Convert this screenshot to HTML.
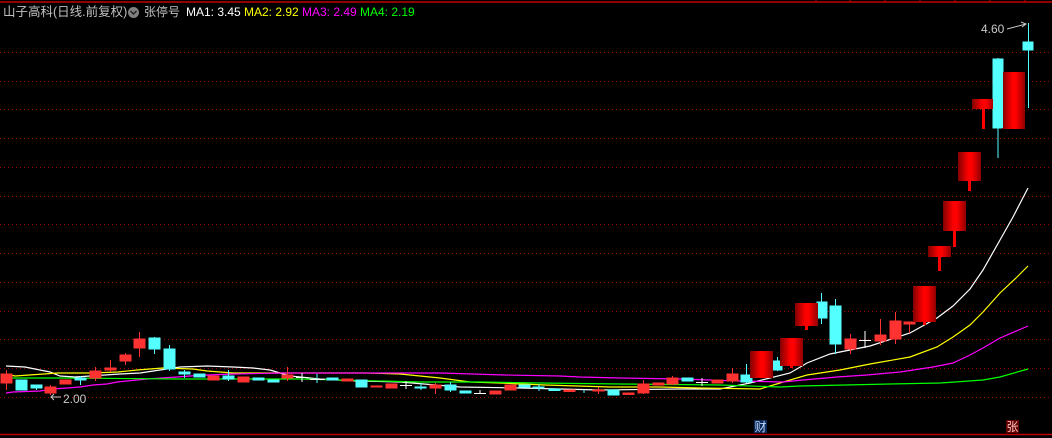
<!DOCTYPE html>
<html><head><meta charset="utf-8"><style>
body{margin:0;background:#000;width:1052px;height:438px;overflow:hidden;position:relative;font-family:"Liberation Sans","Noto Sans CJK SC",sans-serif}
.h{position:absolute;top:5px;font-size:12px;white-space:nowrap;color:#c0c0c0;line-height:14px}
</style></head><body>
<svg width="1052" height="438" style="position:absolute;left:0;top:0">
<defs>
<linearGradient id="rg" x1="0" x2="1" y1="0" y2="0">
<stop offset="0" stop-color="#800000"/><stop offset="0.45" stop-color="#ff0000"/><stop offset="0.6" stop-color="#ff0000"/><stop offset="1" stop-color="#900000"/>
</linearGradient>
</defs>
<line x1="0" y1="2" x2="1052" y2="2" stroke="#c00000" stroke-width="1.5"/>
<g stroke="#c00000" stroke-width="1">
<line x1="816" y1="0" x2="816" y2="2"/><line x1="850" y1="0" x2="850" y2="2"/><line x1="885" y1="0" x2="885" y2="2"/><line x1="920" y1="0" x2="920" y2="2"/><line x1="955" y1="0" x2="955" y2="2"/><line x1="990" y1="0" x2="990" y2="2"/><line x1="1025" y1="0" x2="1025" y2="2"/>
</g>
<line x1="0" y1="434.5" x2="1052" y2="434.5" stroke="#c00000" stroke-width="1.5"/>
<g stroke="#a00000" stroke-width="1" stroke-dasharray="1,3">
<line x1="0" y1="52.5" x2="1052" y2="52.5"/><line x1="0" y1="81.5" x2="1052" y2="81.5"/><line x1="0" y1="109.5" x2="1052" y2="109.5"/><line x1="0" y1="138.5" x2="1052" y2="138.5"/><line x1="0" y1="167.5" x2="1052" y2="167.5"/><line x1="0" y1="196.5" x2="1052" y2="196.5"/><line x1="0" y1="224.5" x2="1052" y2="224.5"/><line x1="0" y1="253.5" x2="1052" y2="253.5"/><line x1="0" y1="282.5" x2="1052" y2="282.5"/><line x1="0" y1="311.5" x2="1052" y2="311.5"/><line x1="0" y1="339.5" x2="1052" y2="339.5"/><line x1="0" y1="368.5" x2="1052" y2="368.5"/><line x1="0" y1="397.5" x2="1052" y2="397.5"/>
</g>
<g fill="none" stroke-width="1.2">
<polyline stroke="#ffffff" points="6,366 25,367 50,372 60,376 75,377 120,374 140,373 160,370 180,367 207,366 233,367 253,368 270,370 280,373 290,376 300,377 320,379 357,381 400,382 460,387 520,388 600,390 680,389 720,389 750,383 790,373 807,363 830,354 870,346 910,333 937,318 953,306 970,289 983,270 1000,240 1013,217 1028,188"/>
<polyline stroke="#ffff00" points="6,374 15,376 58,373 90,373 118,372 137,370 163,368 193,369 207,371 233,373 367,373 400,374 420,376 440,378 455,380 470,382 500,383 545,385 610,387 660,387 700,388 760,389 780,383 807,375 840,370 870,364 910,357 937,347 953,337 970,325 983,312 1000,293 1017,277 1028,266"/>
<polyline stroke="#ff00ff" points="6,393 13,392 40,391 53,389 67,388 80,387 93,385 107,384 117,382 127,381 147,379 177,377 190,376 207,375 233,374 283,373 440,373 505,375 560,376 580,377 620,378 680,379 740,381 783,382 803,380 837,377 867,375 900,372 933,367 953,363 970,355 983,348 1000,338 1028,326"/>
<polyline stroke="#00ff00" points="6,377 13,378 60,378 180,379 300,379 420,382 480,382 540,383 620,384 720,385 780,387 800,386 890,384 940,383 955,382 983,380 1000,377 1028,369"/>
</g>
<g stroke-width="1">
<g fill="#ff3232" stroke="#ff3232">
<line x1="6.5" y1="370" x2="6.5" y2="390"/><rect x="1" y="374" width="11" height="9"/>
<rect x="45" y="387" width="11" height="6"/><line x1="50.5" y1="385" x2="50.5" y2="395"/>
<rect x="60" y="380" width="11" height="4"/>
<line x1="95.5" y1="367" x2="95.5" y2="381"/><rect x="90" y="371" width="11" height="7"/>
<line x1="110.5" y1="360" x2="110.5" y2="372"/><rect x="105" y="368" width="11" height="2"/>
<line x1="125.5" y1="353" x2="125.5" y2="365"/><rect x="120" y="355" width="11" height="6"/>
<line x1="139.5" y1="332" x2="139.5" y2="357"/><rect x="134" y="339" width="11" height="9"/>
<rect x="208" y="376" width="11" height="4"/>
<rect x="238" y="377" width="11" height="5"/>
<line x1="287.5" y1="367" x2="287.5" y2="381"/><rect x="282" y="375" width="11" height="3"/>
<rect x="342" y="379" width="11" height="2"/>
<rect x="371" y="386" width="11" height="1"/>
<rect x="386" y="384" width="11" height="4"/>
<line x1="435.5" y1="383" x2="435.5" y2="394"/><rect x="430" y="385" width="11" height="3"/>
<rect x="490" y="391" width="11" height="3"/>
<rect x="505" y="385" width="11" height="5"/>
<rect x="564" y="390" width="11" height="1.5"/>
<line x1="598.5" y1="387" x2="598.5" y2="394"/><rect x="593" y="390" width="11" height="1"/>
<rect x="623" y="393" width="11" height="1.5"/>
<line x1="643.5" y1="380" x2="643.5" y2="394"/><rect x="638" y="384" width="11" height="9"/>
<rect x="653" y="383" width="11" height="2"/>
<line x1="672.5" y1="376" x2="672.5" y2="385"/><rect x="667" y="378" width="11" height="6"/>
<rect x="712" y="380" width="11" height="3"/>
<line x1="732.5" y1="368" x2="732.5" y2="383"/><rect x="727" y="374" width="11" height="7"/>
<line x1="850.5" y1="334" x2="850.5" y2="354"/><rect x="845" y="339" width="11" height="10"/>
<line x1="880.5" y1="319" x2="880.5" y2="345"/><rect x="875" y="335" width="11" height="6"/>
<line x1="895.5" y1="312" x2="895.5" y2="344"/><rect x="890" y="321" width="11" height="18"/>
<line x1="909.5" y1="322" x2="909.5" y2="333"/><rect x="904" y="322" width="11" height="2"/>
</g>
<g fill="#54ffff" stroke="#54ffff">
<rect x="16" y="380" width="11" height="10"/>
<rect x="31" y="385" width="11" height="3"/><line x1="36.5" y1="385" x2="36.5" y2="390"/>
<line x1="80.5" y1="376" x2="80.5" y2="385"/><rect x="75" y="378" width="11" height="2"/>
<line x1="154.5" y1="337" x2="154.5" y2="354"/><rect x="149" y="338" width="11" height="11"/>
<line x1="169.5" y1="345" x2="169.5" y2="371"/><rect x="164" y="349" width="11" height="20"/>
<line x1="184.5" y1="370" x2="184.5" y2="378"/><rect x="179" y="372" width="11" height="2"/>
<rect x="194" y="374" width="11" height="3"/>
<line x1="228.5" y1="370" x2="228.5" y2="381"/><rect x="223" y="376" width="11" height="3"/>
<rect x="253" y="378" width="11" height="2"/>
<rect x="268" y="380" width="11" height="2"/>
<line x1="317" y1="374" x2="317" y2="383"/>
<rect x="327" y="378" width="11" height="2"/>
<rect x="356" y="380" width="11" height="7"/>
<line x1="421" y1="383" x2="421" y2="390"/><rect x="415" y="387" width="11" height="1"/>
<rect x="445" y="385" width="11" height="5"/><line x1="450.5" y1="382" x2="450.5" y2="392"/>
<rect x="460" y="391" width="11" height="2"/>
<rect x="519" y="385" width="11" height="2"/>
<line x1="539" y1="384" x2="539" y2="391"/><rect x="533" y="387" width="11" height="1"/>
<rect x="549" y="389" width="11" height="1.5"/>
<line x1="584" y1="390" x2="584" y2="393"/>
<rect x="608" y="390" width="11" height="5"/>
<rect x="682" y="378" width="11" height="3"/>
<line x1="746.5" y1="364" x2="746.5" y2="383"/><rect x="741" y="375" width="11" height="7"/>
<line x1="777.5" y1="357" x2="777.5" y2="371"/><rect x="773" y="361" width="9" height="9"/>
<line x1="821.5" y1="293" x2="821.5" y2="324"/><rect x="817" y="302" width="10" height="16"/>
<line x1="835.5" y1="299" x2="835.5" y2="354"/><rect x="830" y="306" width="11" height="38"/>
<line x1="998" y1="58" x2="998" y2="158"/><rect x="993" y="59" width="10" height="69"/>
<line x1="1028.5" y1="23" x2="1028.5" y2="108"/><rect x="1023" y="42" width="10" height="8"/>
</g>
<g stroke="#ffffff">
<line x1="296" y1="377.5" x2="308" y2="377.5"/><line x1="302" y1="373" x2="302" y2="382"/>
<line x1="310" y1="379.5" x2="325" y2="379.5"/>
<line x1="400" y1="385.5" x2="412" y2="385.5"/><line x1="406" y1="381" x2="406" y2="389"/>
<line x1="474" y1="393.5" x2="486" y2="393.5"/><line x1="480" y1="390" x2="480" y2="394"/>
<line x1="696" y1="382.5" x2="708" y2="382.5"/><line x1="702" y1="378" x2="702" y2="386"/>
<line x1="859" y1="340.5" x2="871" y2="340.5"/><line x1="865" y1="331" x2="865" y2="348"/>
</g>
</g>
<g fill="url(#rg)">
<rect x="750" y="351" width="23" height="27"/>
<rect x="780" y="338" width="23" height="28"/><rect x="790" y="366" width="3" height="2" fill="#ff0000"/>
<rect x="795" y="303" width="23" height="23"/><rect x="805" y="326" width="3" height="4" fill="#ff0000"/>
<rect x="913" y="286" width="23" height="36"/><rect x="923" y="322" width="3" height="3" fill="#ff0000"/>
<rect x="928" y="246" width="23" height="11"/><rect x="938" y="257" width="3" height="14" fill="#ff0000"/>
<rect x="943" y="201" width="23" height="30"/><rect x="953" y="231" width="3" height="16" fill="#ff0000"/>
<rect x="958" y="152" width="23" height="29"/><rect x="968" y="181" width="3" height="10" fill="#ff0000"/>
<rect x="972" y="99" width="23" height="10"/><rect x="982" y="109" width="3" height="20" fill="#ff0000"/>
<rect x="1002" y="72" width="23" height="57"/>
</g>
<rect x="993" y="59" width="10" height="69" fill="#54ffff"/>
<text x="981" y="33" font-size="12" fill="#c8c8c8" font-family="Liberation Sans,sans-serif">4.60</text>
<polyline points="1007,29 1026,24" stroke="#c8c8c8" fill="none"/>
<polyline points="1021,22 1026,24 1022,27" stroke="#c8c8c8" fill="none"/>
<text x="63" y="403" font-size="12" fill="#c8c8c8" font-family="Liberation Sans,sans-serif">2.00</text>
<polyline points="51,397 61,397" stroke="#c8c8c8"/>
<polyline points="54,394 51,397 54,400" stroke="#c8c8c8" fill="none"/>
<rect x="754" y="420" width="13" height="13" fill="#0a2a5a"/>
<text x="754.5" y="431" font-size="12" fill="#c0d8ff" font-family="Noto Sans CJK SC,sans-serif">财</text>
<rect x="1006" y="420" width="13" height="13" fill="#600000"/>
<text x="1006.5" y="431" font-size="12" fill="#ffc0c0" font-family="Noto Sans CJK SC,sans-serif">张</text>
<circle cx="133.5" cy="12.5" r="5.5" fill="#808080"/>
<polyline points="130.5,11 133.5,14 136.5,11" stroke="#222" stroke-width="1.5" fill="none"/>
</svg>
<div class="h" style="left:3px;font-size:12.5px">山子高科(日线.前复权)</div>
<div class="h" style="left:144px">张停号</div>
<div class="h" style="left:186px;color:#fff">MA1: 3.45</div>
<div class="h" style="left:244px;color:#ffff00">MA2: 2.92</div>
<div class="h" style="left:302px;color:#ff00ff">MA3: 2.49</div>
<div class="h" style="left:360px;color:#00ff00">MA4: 2.19</div>
</body></html>
